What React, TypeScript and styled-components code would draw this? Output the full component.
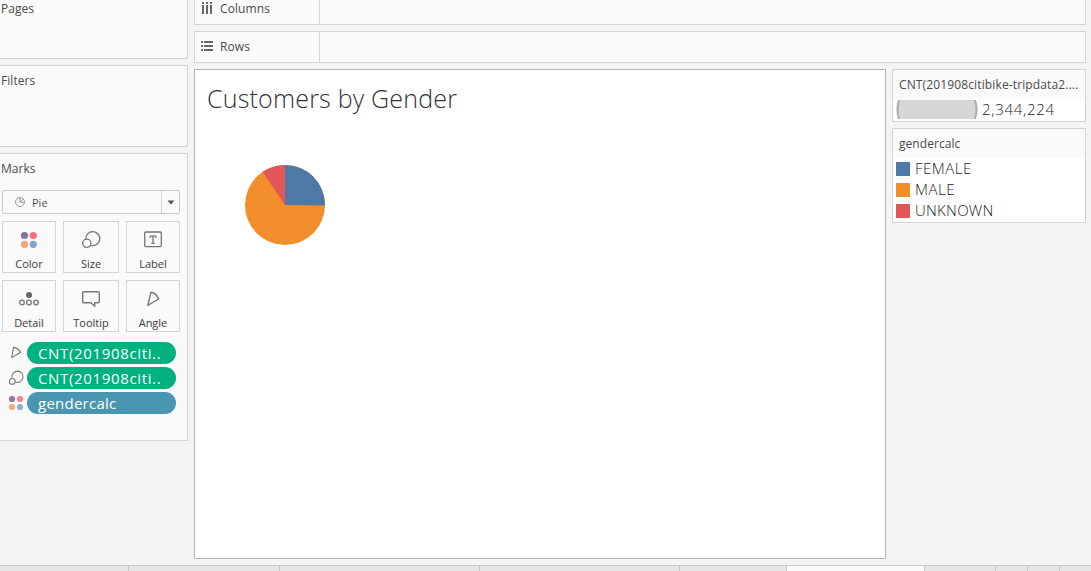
import React from 'react';
import styled, { createGlobalStyle } from 'styled-components';

const GlobalStyle = createGlobalStyle`
  * { box-sizing: border-box; }
  body {
    margin: 0;
    background: #f4f4f4;
    color: #4a4a4a;
    font-family: 'Open Sans', 'Noto Sans', sans-serif;
    font-size: 12px;
    overflow: hidden;
  }
`;

const Workbook = styled.div`
  width: 1091px;
  height: 571px;
  display: flex;
  flex-direction: column;
  overflow: hidden;
`;

const Workspace = styled.div`
  height: 565px;
  flex: none;
  display: grid;
  grid-template-columns: 188px 892px;
  column-gap: 6px;
`;

const Sidebar = styled.aside`
  display: flex;
  flex-direction: column;
  gap: 6px;
`;

const Card = styled.section<{ $height: number; $first?: boolean }>`
  height: ${(p) => p.$height}px;
  flex: none;
  background: #fafafa;
  border: 1px solid #d4d4d4;
  border-left: 0;
  border-top-width: ${(p) => (p.$first ? 0 : 1)}px;
`;

const CardTitle = styled.h2<{ $top: number }>`
  margin: 0;
  padding: ${(p) => p.$top}px 0 0 1px;
  font-size: 12px;
  line-height: 18px;
  font-weight: 400;
  letter-spacing: 0.05px;
`;

const MarkType = styled.div`
  display: flex;
  align-items: center;
  width: 178px;
  height: 24px;
  margin: 12px 0 7px 2px;
  border: 1px solid #c8c8c8;
  border-radius: 2px;
  font-size: 11px;
  color: #555;
`;

const MarkTypeName = styled.span`
  flex: 1;
  padding-left: 6px;
  line-height: 15px;
`;

const MarkTypeIcon = styled.span`
  display: flex;
  padding-left: 11px;
`;

const DropButton = styled.span`
  width: 18px;
  height: 22px;
  border-left: 1px solid #d4d4d4;
  display: flex;
  align-items: center;
  justify-content: center;
`;

const MarkGrid = styled.div`
  display: grid;
  grid-template-columns: 54px 56px 54px;
  grid-auto-rows: 52px;
  gap: 7px;
  padding-left: 2px;
`;

const MarkButton = styled.div`
  border: 1px solid #d4d4d4;
  display: flex;
  flex-direction: column;
  align-items: center;
  padding-top: 6px;
  font-size: 11px;
  line-height: 16px;
  color: #3c3c3c;

  svg { margin-bottom: 6px; flex: none; }
`;

const PillList = styled.div`
  display: flex;
  flex-direction: column;
  gap: 3px;
  padding: 10px 0 0 7px;
`;

const PillRow = styled.div`
  display: flex;
  align-items: center;
  height: 22px;
`;

const PillIcon = styled.span`
  width: 20px;
  height: 20px;
  display: flex;
`;

const Pill = styled.span<{ $color: string; $spacing: number }>`
  width: 149px;
  height: 22px;
  border-radius: 11px;
  padding-left: 11px;
  line-height: 22px;
  font-size: 15px;
  letter-spacing: ${(p) => p.$spacing}px;
  color: #fff;
  white-space: nowrap;
  background: ${(p) => p.$color};
`;

const Main = styled.main`
  display: flex;
  flex-direction: column;
`;

const Shelf = styled.div<{ $height: number; $first?: boolean }>`
  height: ${(p) => p.$height}px;
  margin-bottom: 6px;
  flex: none;
  display: flex;
  background: #fafafa;
  border: 1px solid #d4d4d4;
  border-top-width: ${(p) => (p.$first ? 0 : 1)}px;
`;

const ShelfLabel = styled.div<{ $shift: number }>`
  width: 125px;
  border-right: 1px solid #d4d4d4;
  display: flex;
  align-items: flex-start;
  gap: 6px;
  padding: ${(p) => p.$shift}px 0 0 5px;
  line-height: 18px;
  letter-spacing: 0.1px;

  svg { flex: none; margin-top: 2px; }
`;

const View = styled.div`
  display: flex;
  align-items: flex-start;
  gap: 6px;
`;

const Canvas = styled.article`
  width: 692px;
  height: 490px;
  background: #fff;
  border: 1px solid #b4b4b4;
`;

const SheetTitle = styled.h1`
  margin: 0;
  padding: 11px 0 0 12px;
  font-size: 25px;
  line-height: 34px;
  font-weight: 300;
  letter-spacing: 0.2px;
  color: #333;
`;

const PieHolder = styled.div`
  padding: 50px 0 0 50px;
  line-height: 0;
`;

const Legends = styled.div`
  display: flex;
  flex-direction: column;
  gap: 6px;
`;

const LegendCard = styled.section<{ $height: number }>`
  width: 194px;
  height: ${(p) => p.$height}px;
  border: 1px solid #d4d4d4;
  background: #fff;
`;

const LegendHeader = styled.header<{ $spacing: number }>`
  height: 29px;
  padding-left: 6px;
  line-height: 30px;
  background: #fafafa;
  letter-spacing: ${(p) => p.$spacing}px;
  white-space: nowrap;
`;

const LegendRow = styled.div<{ $gap?: number }>`
  display: flex;
  align-items: center;
  height: 21px;
  padding-left: 3px;
  gap: ${(p) => p.$gap ?? 5}px;
  font-size: 15px;
  line-height: 19px;
  font-weight: 300;
  color: #222;
`;

const LegendName = styled.span<{ $spacing: number }>`
  letter-spacing: ${(p) => p.$spacing}px;
`;

const Swatch = styled.span<{ $color: string }>`
  width: 14px;
  height: 14px;
  background: ${(p) => p.$color};
`;

const SheetTabs = styled.nav`
  height: 6px;
  flex: none;
  display: flex;
  border-top: 1px solid #c8c8c8;
  background: #e6e6e6;
`;

const SheetTab = styled.span<{ $width: number; $active?: boolean }>`
  width: ${(p) => p.$width}px;
  flex: none;
  border-right: 1px solid #c8c8c8;
  background: ${(p) => (p.$active ? '#fafafa' : '#e6e6e6')};
`;

const ColorIcon = ({ small }: { small?: boolean }) => {
  const lo = small ? 5 : 6.5;
  const hi = small ? 13 : 15.3;
  const r = small ? 3.1 : 3.6;
  return (
    <svg width={small ? 18 : 22} height={small ? 20 : 22}>
      <circle cx={lo} cy={lo + 1} r={r} fill={small ? '#8e7a9f' : '#85709a'} />
      <circle cx={hi} cy={lo + 1} r={r} fill={small ? '#f97f8b' : '#f96f80'} />
      <circle cx={lo} cy={hi + 1} r={r} fill="#f4a77c" />
      <circle cx={hi} cy={hi + 1} r={r} fill={small ? '#8fadd0' : '#81a5cf'} />
    </svg>
  );
};

const SizeIcon = ({ small }: { small?: boolean }) => (
  <svg width={small ? 18 : 22} height={small ? 20 : 22} fill="none" stroke="#777" strokeWidth={small ? 1.1 : 1.3}>
    {small ? (
      <>
        <path d="M4.9 9.6A5.6 5.6 0 1 1 8.3 13.9" />
        <circle cx="5.3" cy="13.4" r="2.9" />
      </>
    ) : (
      <>
        <path d="M5.8 11.3A7 7 0 1 1 10.6 17.3" />
        <circle cx="6.8" cy="15.3" r="4.1" />
      </>
    )}
  </svg>
);

const LabelIcon = () => (
  <svg width="22" height="22" fill="none" stroke="#757575" strokeWidth="1.3">
    <rect x="2.7" y="4" width="16.6" height="14.6" rx="1" />
    <path d="M8.2 9.8V8.2h5.6v1.6M11 8.2v7.2M9.3 15.4h3.4" />
  </svg>
);

const DetailIcon = () => (
  <svg width="22" height="22" fill="none" stroke="#777" strokeWidth="1.3">
    <circle cx="11" cy="8" r="3" fill="#666" stroke="none" />
    <circle cx="4" cy="15.5" r="2.3" />
    <circle cx="11" cy="15.5" r="2.3" />
    <circle cx="18" cy="15.5" r="2.3" />
  </svg>
);

const TooltipIcon = () => (
  <svg width="22" height="22" fill="none" stroke="#777" strokeWidth="1.4" strokeLinejoin="round">
    <path d="M3.7 4.7h14.6q1 0 1 1v9q0 1-1 1h-3.6V19.2L10.9 15.7H3.7q-1 0-1-1v-9q0-1 1-1z" />
  </svg>
);

const AngleIcon = ({ small }: { small?: boolean }) => (
  <svg width={small ? 18 : 22} height={small ? 20 : 22} fill="none" stroke="#777" strokeWidth={small ? 1.1 : 1.4} strokeLinejoin="round">
    <path d={small ? 'M6.5 4.4L4.7 14.5L13.5 9.5Q11.7 5 6.5 4.4Z' : 'M9 5.2L5.8 18.3L16.6 12Q14.6 6.2 9 5.2Z'} />
  </svg>
);

const ColumnsIcon = () => (
  <svg width="14" height="14" fill="#666">
    {[2, 6, 10].map((x) => (
      <React.Fragment key={x}>
        <rect x={x} y="0" width="2" height="2" />
        <rect x={x} y="3" width="2" height="9" />
      </React.Fragment>
    ))}
  </svg>
);

const RowsIcon = () => (
  <svg width="14" height="14" fill="#666">
    {[1, 5, 9].map((y) => (
      <React.Fragment key={y}>
        <rect x="1" y={y} width="2" height="2" />
        <rect x="4" y={y} width="9" height="2" />
      </React.Fragment>
    ))}
  </svg>
);

const PieIcon = () => (
  <svg width="12" height="12" fill="none" stroke="#999">
    <circle cx="6" cy="6" r="4.5" />
    <path d="M6 2V6.2H10M6 6L8.8 3.2" />
  </svg>
);

const marks = [
  ['Color', <ColorIcon />],
  ['Size', <SizeIcon />],
  ['Label', <LabelIcon />],
  ['Detail', <DetailIcon />],
  ['Tooltip', <TooltipIcon />],
  ['Angle', <AngleIcon />],
] as const;

const genders = [
  { name: 'FEMALE', color: '#4e79a7', spacing: 0.5 },
  { name: 'MALE', color: '#f28e2b', spacing: 0.5 },
  { name: 'UNKNOWN', color: '#e15759', spacing: 0.25 },
];

const tabWidths = [129, 151, 200, 200, 107, 138, 71, 32, 32];

export default function App() {
  return (
    <Workbook>
      <GlobalStyle />
      <Workspace>
        <Sidebar>
          <Card $height={59} $first>
            <CardTitle $top={0}>Pages</CardTitle>
          </Card>
          <Card $height={82}>
            <CardTitle $top={6}>Filters</CardTitle>
          </Card>
          <Card $height={288}>
            <CardTitle $top={6}>Marks</CardTitle>
            <MarkType>
              <MarkTypeIcon><PieIcon /></MarkTypeIcon>
              <MarkTypeName>Pie</MarkTypeName>
              <DropButton>
                <svg width="8" height="5"><path d="M0.5 0.5h7L4 4.5z" fill="#555" /></svg>
              </DropButton>
            </MarkType>
            <MarkGrid>
              {marks.map(([name, icon]) => (
                <MarkButton key={name}>{icon}{name}</MarkButton>
              ))}
            </MarkGrid>
            <PillList>
              <PillRow>
                <PillIcon><AngleIcon small /></PillIcon>
                <Pill $color="#00b180" $spacing={0.65}>CNT(201908citi..</Pill>
              </PillRow>
              <PillRow>
                <PillIcon><SizeIcon small /></PillIcon>
                <Pill $color="#00b180" $spacing={0.65}>CNT(201908citi..</Pill>
              </PillRow>
              <PillRow>
                <PillIcon><ColorIcon small /></PillIcon>
                <Pill $color="#4996b2" $spacing={0.25}>gendercalc</Pill>
              </PillRow>
            </PillList>
          </Card>
        </Sidebar>
        <Main>
          <Shelf $height={25} $first>
            <ShelfLabel $shift={0}><ColumnsIcon />Columns</ShelfLabel>
          </Shelf>
          <Shelf $height={32}>
            <ShelfLabel $shift={6}><RowsIcon />Rows</ShelfLabel>
          </Shelf>
          <View>
            <Canvas>
              <SheetTitle>Customers by Gender</SheetTitle>
              <PieHolder>
                <svg width="80" height="80">
                  <circle cx="40" cy="40" r="40" fill="#f28e2b" />
                  <path d="M40 40V0A40 40 0 0 1 80 40.4Z" fill="#4e79a7" />
                  <path d="M40 40L17.6 6.9A40 40 0 0 1 40 0Z" fill="#e15759" />
                </svg>
              </PieHolder>
            </Canvas>
            <Legends>
              <LegendCard $height={53}>
                <LegendHeader $spacing={0.13}>CNT(201908citibike-tripdata2....</LegendHeader>
                <LegendRow $gap={4}>
                  <svg width="82" height="19">
                    <path d="M3 0H79Q82 9.5 79 19H3Q0 9.5 3 0Z" fill="#d6d6d6" />
                    <path d="M3 0Q0 9.5 3 19M79 0Q82 9.5 79 19" fill="none" stroke="#aaa" strokeWidth="2" />
                  </svg>
                  <LegendName $spacing={0.7}>2,344,224</LegendName>
                </LegendRow>
              </LegendCard>
              <LegendCard $height={95}>
                <LegendHeader $spacing={0.05}>gendercalc</LegendHeader>
                {genders.map((g) => (
                  <LegendRow key={g.name}>
                    <Swatch $color={g.color} />
                    <LegendName $spacing={g.spacing}>{g.name}</LegendName>
                  </LegendRow>
                ))}
              </LegendCard>
            </Legends>
          </View>
        </Main>
      </Workspace>
      <SheetTabs>
        {tabWidths.map((w, i) => (
          <SheetTab key={i} $width={w} $active={i === 5} />
        ))}
      </SheetTabs>
    </Workbook>
  );
}
